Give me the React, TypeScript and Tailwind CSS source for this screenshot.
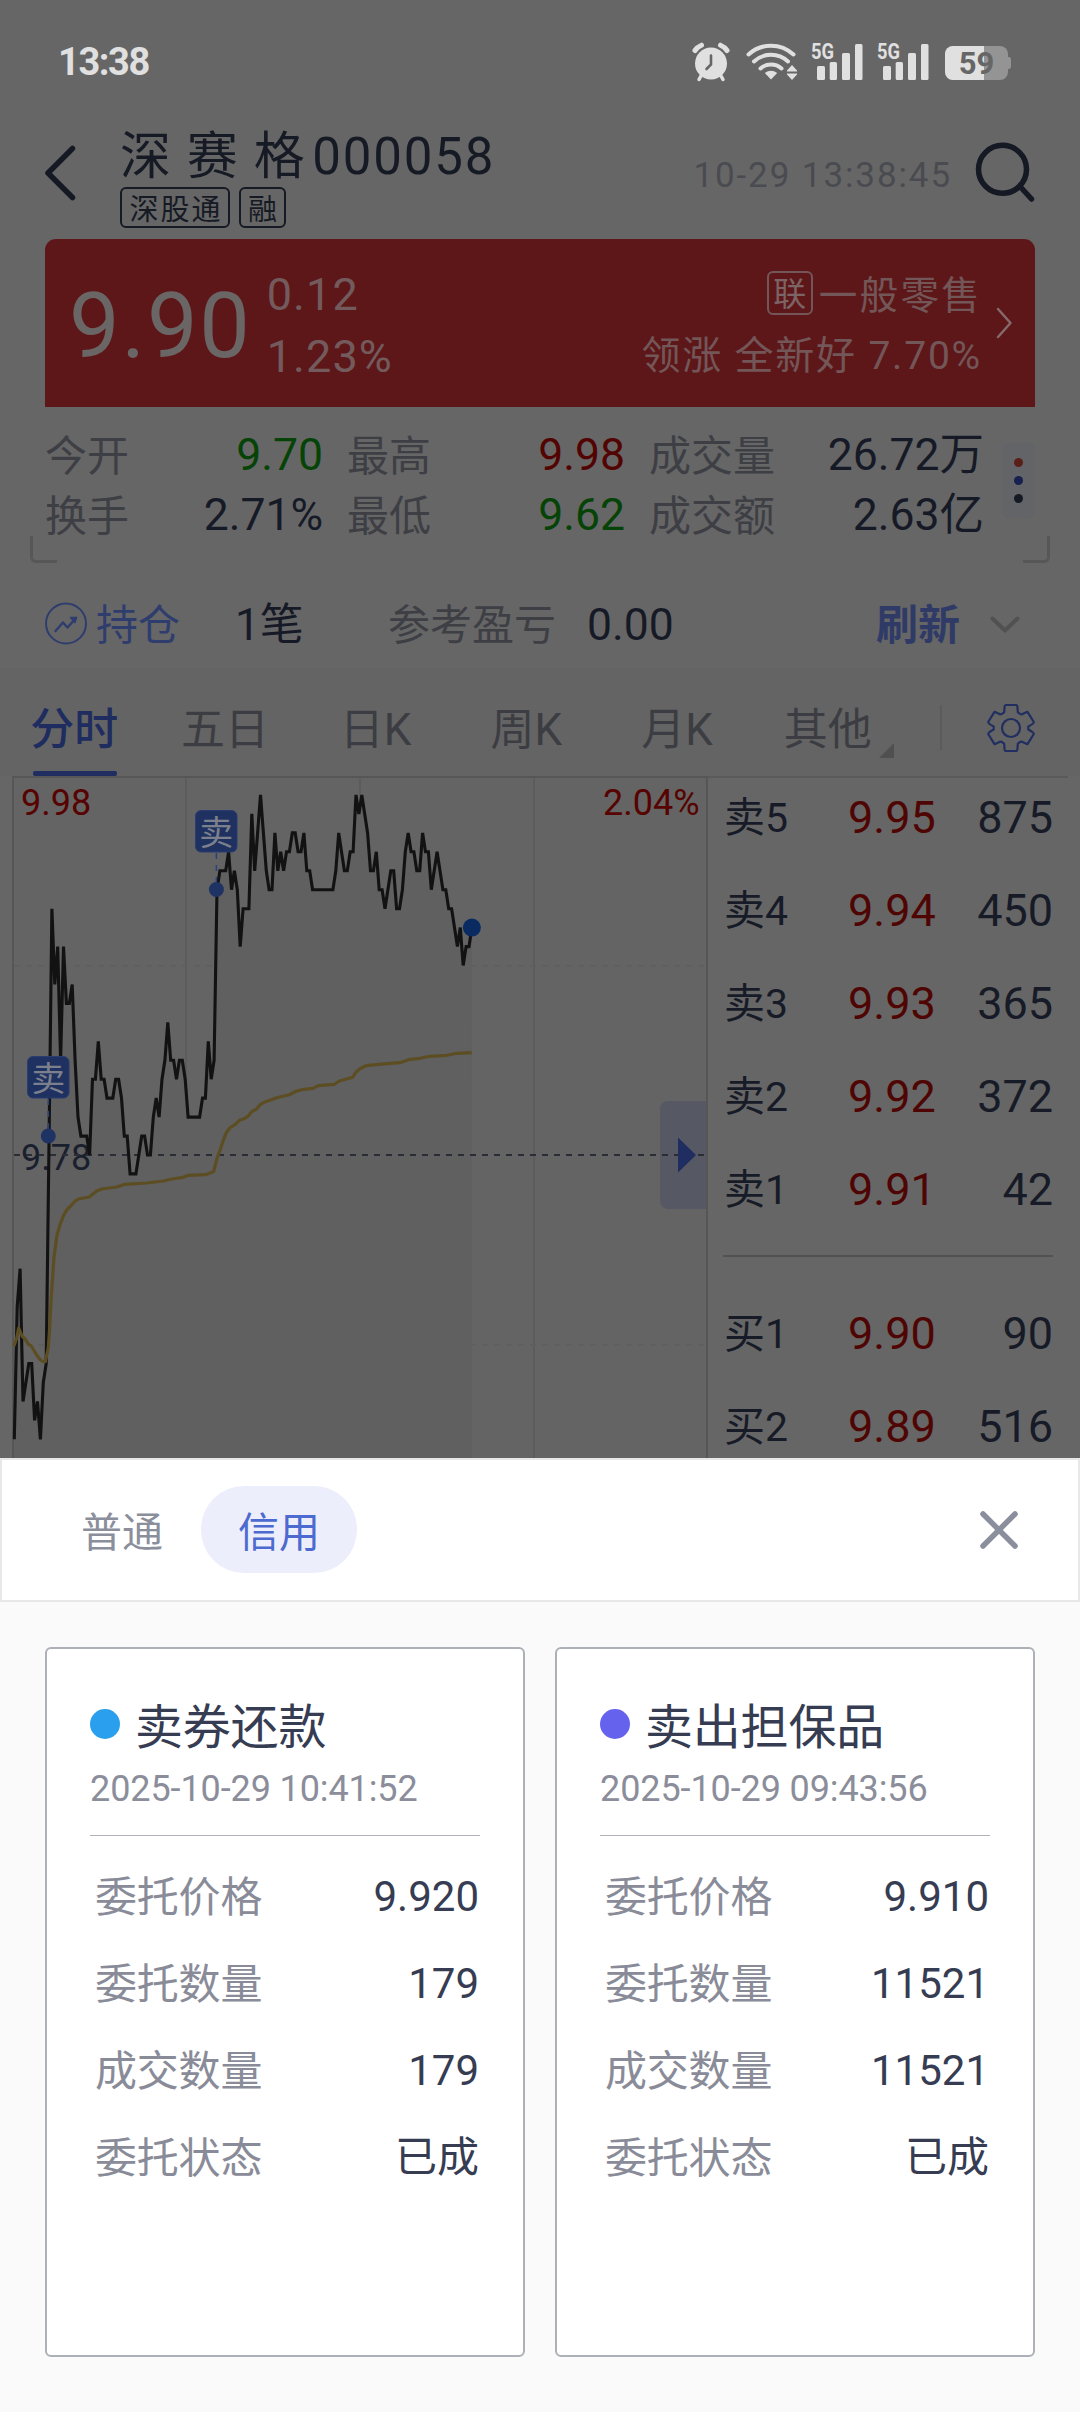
import type { ReactNode } from 'react'

// price offset from the previous close (9.78), in 0.01 ticks, one entry per minute
const TICKS = [
  -15, -8, -6, -13, -12, -11, -11, -14, -13, -15, -12, -11, 1, 13, 9, 11, 5, 11, 8, 8,
  9, 5, 2, 1, 1, 1, 0, 4, 4, 6, 4, 4, 3, 3, 3, 4, 4, 3, 1, 1,
  -1, -1, -1, 0, 1, 1, 0, 0, 2, 3, 2, 4, 5, 7, 5, 5, 4, 5, 5, 4,
  2, 2, 2, 2, 2, 3, 3, 6, 4, 5, 14, 15, 15, 15, 16, 14, 15, 14, 11, 13,
  13, 13, 18, 15, 17, 19, 17, 15, 14, 14, 17, 15, 16, 15, 16, 16, 17, 17, 16, 16,
  17, 15, 15, 14, 14, 14, 14, 14, 14, 14, 14, 15, 17, 16, 15, 15, 16, 16, 19, 18,
  19, 18, 17, 15, 15, 16, 14, 14, 13, 14, 15, 15, 13, 13, 14, 16, 17, 16, 16, 15,
  15, 17, 16, 16, 14, 15, 16, 15, 14, 14, 13, 13, 12, 11, 12, 10, 11, 11, 12,
]

const AVERAGE = [
  '2,570 4.7,562 6.7,552 10,560 13,563 16.3,568 19.3,570 22.3,575 24.7,579 28,583.5 30.7,585.5 33.3,585.7',
  '36.3,572 37.7,551 39.3,521 42,481 45,459 48,449 51.3,440 54.7,434 58.7,430 62.7,425.5 66.3,423 77.3,421',
  '84.7,415 89.7,413 104.7,411 113,408.3 134.7,407 151.3,405 159.7,403 171.3,401.3 176.3,399.3 193.7,398.7',
  '201.7,395.5 204.7,383.3 208.7,372.3 211.7,363.3 214.3,356.7 218,351.7 223,348.7 227.3,344.3 232.3,342.7',
  '236.3,340 239.3,336 244.7,333 248,328.7 252,326.3 264.7,321.7 277.3,318.7 284,315.3 289.7,313.7 301.3,312.3',
  '306.3,309.7 322.3,308.3 327.3,305 340.7,301.3 344.3,295.7 348,292.7 354,289.7 374.7,287.7 388,286.7 398,283.3',
  '408,282.3 418,280.3 434.7,279.3 444.7,277.3 459.7,276.7',
].join(' ')

const BASE_Y = 379
const minuteX = (i: number) => 2.3 + i * 2.896
const tickY = (t: number) => BASE_Y - t * 18.95

const QUOTES = [
  { label: '今开', value: '9.70', color: 'text-[#064306]' },
  { label: '最高', value: '9.98', color: 'text-[#520402]' },
  { label: '成交量', value: '26.72万', color: 'text-[#161a26]' },
  { label: '换手', value: '2.71%', color: 'text-[#161a26]' },
  { label: '最低', value: '9.62', color: 'text-[#064306]' },
  { label: '成交额', value: '2.63亿', color: 'text-[#161a26]' },
]

const ASKS = [
  ['卖5', '9.95', '875'],
  ['卖4', '9.94', '450'],
  ['卖3', '9.93', '365'],
  ['卖2', '9.92', '372'],
  ['卖1', '9.91', '42'],
]

const BIDS = [
  ['买1', '9.90', '90'],
  ['买2', '9.89', '516'],
]

const TABS = ['分时', '五日', '日K', '周K', '月K', '其他']

const ORDERS = [
  {
    title: '卖券还款',
    time: '2025-10-29 10:41:52',
    dot: 'bg-[#2a9fed]',
    rows: [['委托价格', '9.920'], ['委托数量', '179'], ['成交数量', '179'], ['委托状态', '已成']],
  },
  {
    title: '卖出担保品',
    time: '2025-10-29 09:43:56',
    dot: 'bg-[#6562ee]',
    rows: [['委托价格', '9.910'], ['委托数量', '11521'], ['成交数量', '11521'], ['委托状态', '已成']],
  },
]

function Cjk({ className = '', children }: { className?: string; children: ReactNode }) {
  return <span className={`font-['Noto_Sans_CJK_SC',sans-serif] whitespace-nowrap ${className}`}>{children}</span>
}

function Signal() {
  return (
    <svg className="-mt-[10px] overflow-visible" width="53" height="50" viewBox="-1 -10 53 50" fill="#e0e0e0">
      <text x="0" y="17" fontFamily="Roboto, sans-serif" fontWeight="700" fontSize="21.5" textLength="23" lengthAdjust="spacingAndGlyphs">5G</text>
      <rect x="6" y="24" width="8" height="14" rx="1.5" />
      <rect x="18.7" y="20" width="7.3" height="18" rx="1.5" />
      <rect x="31" y="11" width="8" height="27" rx="1.5" />
      <rect x="44" y="2" width="7.5" height="36" rx="1.5" />
    </svg>
  )
}

function StatusBar() {
  return (
    <div className="flex h-[124px] items-center pl-[58px] pr-[68px]">
      <span className="text-[38px] font-bold leading-[48px] tracking-[-1.4px] text-[#e0e0e0]">13:38</span>
      <div className="ml-auto flex items-center">
        <svg width="38" height="40" viewBox="0 0 38 40">
          <path d="M3 8.5 A14 14 0 0 1 9.5 3.2 M35 8.5 A14 14 0 0 0 28.5 3.2" fill="none" stroke="#e0e0e0" strokeWidth="5" strokeLinecap="round" />
          <path d="M9.5 33 7 37.5 M28.5 33 31 37.5" stroke="#e0e0e0" strokeWidth="3.5" strokeLinecap="round" />
          <circle cx="19" cy="21.5" r="16" fill="#e0e0e0" />
          <path d="M19 13.5v9l-4.5 4.5" fill="none" stroke="#666" strokeWidth="2.6" strokeLinecap="round" />
        </svg>
        <svg className="ml-[16px]" width="52" height="40" viewBox="0 0 52 40" fill="none" stroke="#e0e0e0">
          <path d="M2.5 12.5 A33 33 0 0 1 47.5 12.5" strokeWidth="4" strokeLinecap="round" />
          <path d="M8 19.5 A25 25 0 0 1 42 19.5" strokeWidth="4" strokeLinecap="round" />
          <path d="M14.5 26.5 A16 16 0 0 1 35.5 26.5" strokeWidth="4" strokeLinecap="round" />
          <path d="M18.8 31 Q25 26.5 31.2 31 L25 37.5 Z" fill="#e0e0e0" stroke="none" />
          <path d="M46 23l5 5.5v1H41v-1zM46 38l5-5.5v-1H41v1z" fill="#e0e0e0" stroke="none" />
        </svg>
        <div className="ml-[12px] flex gap-[13px]">
          <Signal />
          <Signal />
        </div>
        <svg className="ml-[15px]" width="68" height="40" viewBox="0 0 68 40">
          <clipPath id="battery">
            <rect x="1" y="4" width="63" height="34" rx="8" />
          </clipPath>
          <path d="M63 15h2q2 0 2 3v6q0 3-2 3h-2z" fill="#949494" />
          <g clipPath="url(#battery)">
            <rect x="1" y="4" width="63" height="34" fill="#949494" />
            <rect x="1" y="4" width="39" height="34" fill="#e0e0e0" />
          </g>
          <text x="32.5" y="32" textAnchor="middle" fontFamily="Roboto, sans-serif" fontWeight="700" fontSize="31" fill="#666">59</text>
        </svg>
      </div>
    </div>
  )
}

function Header() {
  return (
    <div className="flex h-[115px] pl-[44px] text-[#161a24]">
      <svg className="mt-[20px]" width="32" height="58" viewBox="0 0 32 58" fill="none" stroke="#151923" strokeWidth="5.5" strokeLinecap="round" strokeLinejoin="round">
        <path d="M28.5 4.5 4 29l24.5 24.5" />
      </svg>
      <div className="ml-[44px]">
        <div className="h-[63px] whitespace-pre text-[51px] leading-[65px] tracking-[1.6px]">
          深 赛 格<span className="ml-[6px] tracking-[1.8px]">000058</span>
        </div>
        <div className="flex gap-[9px]">
          <div className="flex h-[41px] w-[110px] items-center justify-center rounded-[6px] border-2 border-[#161a24] pl-[2px]">
            <Cjk className="pb-[1px] text-[29px] leading-[30px] tracking-[2px]">深股通</Cjk>
          </div>
          <div className="flex h-[41px] w-[47px] items-center justify-center rounded-[6px] border-2 border-[#161a24]">
            <Cjk className="pb-[1px] text-[29px] leading-[30px]">融</Cjk>
          </div>
        </div>
      </div>
      <div className="ml-auto mr-[22px] h-[103px] text-[35px] leading-[103px] tracking-[1.9px] text-[#4a4b50]">10-29 13:38:45</div>
      <svg className="mr-[45px] mt-[18px]" width="61" height="62" viewBox="0 0 61 62" fill="none" stroke="#151923" strokeWidth="5.5" strokeLinecap="round">
        <circle cx="28.5" cy="27.3" r="24" />
        <path d="M46.5 45 57.5 57" />
      </svg>
    </div>
  )
}

function PriceCard() {
  return (
    <div className="mx-[45px] flex h-[168px] rounded-t-[11px] bg-[#5e1719] pl-[24px]">
      <span className="text-[90px] leading-[175px] tracking-[1.8px] text-[#6b6666]">9.90</span>
      <div className="ml-[15px] pt-[25px] text-[45px] leading-[62px] tracking-[1.1px] text-[#735b5d]">
        <div>0.12</div>
        <div>1.23%</div>
      </div>
      <div className="ml-auto flex flex-col items-end pt-[24px] text-[#735658]">
        <div className="flex h-[60px] items-center">
          <div className="mr-[6px] flex h-[44px] w-[46px] items-center justify-center rounded-[6px] border-2 border-[#735658] text-[#7c6365]">
            <Cjk className="pb-[2px] text-[33px] leading-[36px]">联</Cjk>
          </div>
          <Cjk className="pb-[2px] text-[38.5px] leading-[58px] tracking-[2.3px]">一般零售</Cjk>
        </div>
        <div className="mt-[2px] whitespace-pre text-[39px] leading-[62px] tracking-[1.8px]">领涨 全新好 7.70%</div>
      </div>
      <svg className="ml-[14px] mr-[22px] mt-[67px]" width="17" height="34" viewBox="0 0 17 34" fill="none" stroke="#85696b" strokeWidth="2.5" strokeLinecap="round" strokeLinejoin="round">
        <path d="M2 3 14.5 17 2 31" />
      </svg>
    </div>
  )
}

function QuoteGrid() {
  return (
    <>
      <div className="flex h-[137px] pl-[45px] pt-[17px]">
        <div className="grid h-[120px] grid-cols-[278px_278px_335px] grid-rows-2 gap-x-[24px]">
          {QUOTES.map(q => (
            <div key={q.label} className="flex items-center justify-between leading-[60px]">
              <Cjk className="-mt-[2px] text-[42px] text-[#3e3f45]">{q.label}</Cjk>
              <span className={`pt-[2px] text-[44.5px] ${q.color}`}>{q.value}</span>
            </div>
          ))}
        </div>
        <div className="ml-[18px] mt-[19px] flex h-[75px] w-[33px] flex-col items-center justify-center gap-[9px] rounded-[6px] bg-[#626467]">
          <i className="size-[9px] rounded-full bg-[#5a2018]" />
          <i className="size-[9px] rounded-full bg-[#17204f]" />
          <i className="size-[9px] rounded-full bg-[#151923]" />
        </div>
      </div>
      <div className="-mt-[8px] flex h-[27px] justify-between px-[30px]">
        <div className="w-[27px] rounded-bl-[6px] border-b-3 border-l-3 border-[#575757]" />
        <div className="w-[27px] rounded-br-[6px] border-b-3 border-r-3 border-[#575757]" />
      </div>
    </>
  )
}

function HoldingRow() {
  return (
    <div className="flex h-[105px] items-center pl-[44px] pt-[16px] leading-[60px]">
      <svg width="44" height="44" viewBox="0 0 44 44" fill="none" stroke="#2f3d6e" strokeLinecap="round" strokeLinejoin="round">
        <circle cx="22" cy="21.5" r="20" strokeWidth="2" />
        <path d="M11.5 29 19 20.5l4.5 5L32 16" strokeWidth="2.5" />
        <path d="M26.5 15.5h6l-1.5 5z" strokeWidth="1.5" fill="#2f3d6e" />
      </svg>
      <Cjk className="-mt-[3px] ml-[8px] w-[139px] text-[42px] text-[#2f3d6e]">持仓</Cjk>
      <span className="w-[153px] pt-[2px] text-[44px] text-[#161a26]">1笔</span>
      <Cjk className="-mt-[3px] w-[199px] text-[42px] text-[#3e3f45]">参考盈亏</Cjk>
      <span className="w-[289px] pt-[2px] text-[44.5px] text-[#161a26]">0.00</span>
      <Cjk className="-mt-[3px] w-[112px] text-[42px] font-bold text-[#2f3b66]">刷新</Cjk>
      <svg width="34" height="18" viewBox="0 0 34 18" fill="none" stroke="#515151" strokeWidth="4" strokeLinecap="round" strokeLinejoin="round">
        <path d="M4.5 3.5 17 15.5 29.5 3.5" />
      </svg>
    </div>
  )
}

function ChartTabs() {
  return (
    <div className="flex h-[108px] bg-[#646464] text-[44px] leading-[92px]">
      <div className="-ml-px grid w-[904px] grid-cols-6 text-center text-[#3c3d42]">
        {TABS.map((tab, i) => (
          <div key={tab} className="relative whitespace-nowrap pt-[16px]">
            <span className={i === 0 ? 'font-medium text-[#1f2c5f]' : ''}>{tab}</span>
            {i === 0 && <i className="absolute bottom-0 left-[34px] h-[5px] w-[84px] rounded-[2px] bg-[#1f2d60]" />}
            {tab === '其他' && (
              <svg className="absolute bottom-[18px] right-[9px]" width="15" height="15" viewBox="0 0 15 15" fill="#505050">
                <path d="M15 0v15H0z" />
              </svg>
            )}
          </div>
        ))}
      </div>
      <div className="ml-[37px] mt-[37px] h-[45px] w-[2px] bg-[#5b5b5b]" />
      <svg className="ml-[44px] mt-[35px]" width="50" height="50" viewBox="-25 -25 50 50" fill="none" stroke="#212e60" strokeWidth="2.2" strokeLinejoin="round">
        <path d="M-5.2-23H5.2Q6.3-23 6.4-21.5L6.8-15.8Q10-12.6 12-14.2L16.5-16.2 22.8-6Q23-4.5 17.3-1.5V1.5Q23 4.5 22.8 6L16.5 16.2 12 14.2Q10 12.6 6.8 15.8L6.4 21.5Q6.3 23 5.2 23H-5.2Q-6.3 23-6.4 21.5L-6.8 15.8Q-10 12.6-12 14.2L-16.5 16.2-22.8 6Q-23 4.5-17.3 1.5V-1.5Q-23-4.5-22.8-6L-16.5-16.2-12-14.2Q-10-12.6-6.8-15.8L-6.4-21.5Q-6.3-23-5.2-23Z" />
        <circle r="9" />
      </svg>
    </div>
  )
}

function SellMarker({ x, y, dotX, dotY }: { x: number; y: number; dotX: number; dotY: number }) {
  return (
    <g>
      <path d={`M${dotX} ${y + 43}V${dotY}`} stroke="#2b427d" strokeWidth="1.5" strokeDasharray="6 6" />
      <rect x={x + 0.5} y={y + 0.5} width="41.5" height="41.5" rx="5.5" fill="#1f3160" stroke="#2a3d72" />
      <text x={x + 21.25} y={y + 35} textAnchor="middle" fontFamily="Noto Sans CJK SC, sans-serif" fontSize="34" fill="#7b808c">卖</text>
      <circle cx={dotX} cy={dotY} r="7.5" fill="#1f3264" />
    </g>
  )
}

function MinuteChart() {
  const line = TICKS.map((t, i) => `${minuteX(i).toFixed(1)},${tickY(t).toFixed(1)}`).join(' ')
  const lastX = minuteX(TICKS.length - 1)

  return (
    <svg className="ml-[12px] shrink-0" width="696" height="682" viewBox="0 0 696 682" fill="none" fontFamily="Roboto, sans-serif">
      <rect width="696" height="682" fill="#646464" />
      <path d="M174 2V682M348 2V682M522 2V682" stroke="#5c5c5c" strokeWidth="2" />
      <path d="M2 189.7H694M2 568.8H694" stroke="#5e5e5e" strokeWidth="1.5" strokeDasharray="6 6" />
      <polygon points={`2,682 ${line} ${lastX},682`} fill="#606060" />
      <path d="M0 1H696M1 0V682M695 0V682" stroke="#565656" strokeWidth="2" />
      <g fontSize="36">
        <text x="9" y="39" fill="#560301">9.98</text>
        <text x="687.5" y="39" textAnchor="end" fill="#560301">2.04%</text>
        <text x="9" y="394" fill="#1a1f2d">9.78</text>
      </g>
      <path d="M656 325h38v108h-38a8 8 0 0 1-8-8v-92a8 8 0 0 1 8-8z" fill="#565963" />
      <path d="M2 379H694" stroke="#2a2d35" strokeWidth="2" strokeDasharray="6 6" />
      <path d="M666 361.5 684 379l-18 17.5z" fill="#1f2d60" />
      <polyline points={line} stroke="#121212" strokeWidth="3.1" />
      <polyline points={AVERAGE} stroke="#5c4d22" strokeWidth="3.2" strokeLinejoin="round" />
      <SellMarker x={15} y={280} dotX={36.3} dotY={360} />
      <SellMarker x={183} y={34} dotX={204.4} dotY={113.5} />
      <circle cx={lastX} cy={tickY(12)} r="9" fill="#0a2b62" />
    </svg>
  )
}

function BookRow({ row }: { row: string[] }) {
  const [label, price, volume] = row
  return (
    <div className="flex h-[93px] items-center pl-px leading-[60px] text-[#171b27]">
      <span className="w-[124px] pt-[1px] text-[41px]">{label}</span>
      <span className="text-[45px] text-[#4e0503]">{price}</span>
      <span className="ml-auto text-[45px]">{volume}</span>
    </div>
  )
}

function OrderBook() {
  return (
    <div className="w-[360px] border-t-2 border-[#5a5a5a] px-[15px]">
      <div className="-mt-[7px]">
        {ASKS.map(row => <BookRow key={row[0]} row={row} />)}
      </div>
      <div className="mb-[29px] mt-[19px] h-[2px] bg-[#525252]" />
      <div className="pt-[1px]">
        {BIDS.map(row => <BookRow key={row[0]} row={row} />)}
      </div>
    </div>
  )
}

function OrderCard({ order }: { order: (typeof ORDERS)[number] }) {
  return (
    <div className="h-[710px] w-[480px] rounded-[6px] border-2 border-[#aeb0b7] bg-white px-[43px] pt-[44px]">
      <div className="flex h-[62px] items-center">
        <i className={`size-[30px] rounded-full ${order.dot}`} />
        <Cjk className="-mt-[2px] ml-[15px] text-[48px] leading-[62px] tracking-[-0.2px] text-[#363c52]">{order.title}</Cjk>
      </div>
      <div className="mt-[2px] h-[78px] text-[36px] leading-[65px] tracking-[-0.1px] text-[#8b8e9a]">{order.time}</div>
      <div className="h-px bg-[#b0b2b8]" />
      <div className="pl-[5px] pt-[17px]">
        {order.rows.map(([label, value]) => (
          <div key={label} className="flex h-[87px] items-center justify-between text-[42px] leading-[60px]">
            <Cjk className="pb-[6px] tracking-[-0.2px] text-[#898c98]">{label}</Cjk>
            <span className="-mr-px w-max pr-[2px] text-[#363c52]">{value}</span>
          </div>
        ))}
      </div>
    </div>
  )
}

function OrderSheet() {
  return (
    <div className="h-[954px] bg-[#fafafa]">
      <div className="flex h-[144px] items-center border-2 border-[#e8e8e8] bg-white text-[41px] leading-[60px]">
        <Cjk className="ml-[79px] pb-[3px] text-[#8b8e9b]">普通</Cjk>
        <div className="-mt-px ml-[38px] flex h-[87px] w-[156px] items-center justify-center rounded-[43px] bg-[#eceefb]">
          <Cjk className="pb-[2px] text-[#4c6acf]">信用</Cjk>
        </div>
        <svg className="ml-auto mr-[59px]" width="40" height="40" viewBox="0 0 40 40" stroke="#8b8e9c" strokeWidth="5.5" strokeLinecap="round">
          <path d="M4 4 36 36M36 4 4 36" />
        </svg>
      </div>
      <div className="flex justify-between px-[45px] pt-[45px]">
        {ORDERS.map(order => <OrderCard key={order.title} order={order} />)}
      </div>
    </div>
  )
}

export default function App() {
  return (
    <div lang="zh-CN" className="h-[2412px] w-[1080px] overflow-hidden bg-[#666] font-[Roboto,'Noto_Sans_CJK_SC',sans-serif]">
      <StatusBar />
      <Header />
      <PriceCard />
      <QuoteGrid />
      <HoldingRow />
      <ChartTabs />
      <div className="flex h-[682px] overflow-hidden">
        <MinuteChart />
        <OrderBook />
      </div>
      <OrderSheet />
    </div>
  )
}
